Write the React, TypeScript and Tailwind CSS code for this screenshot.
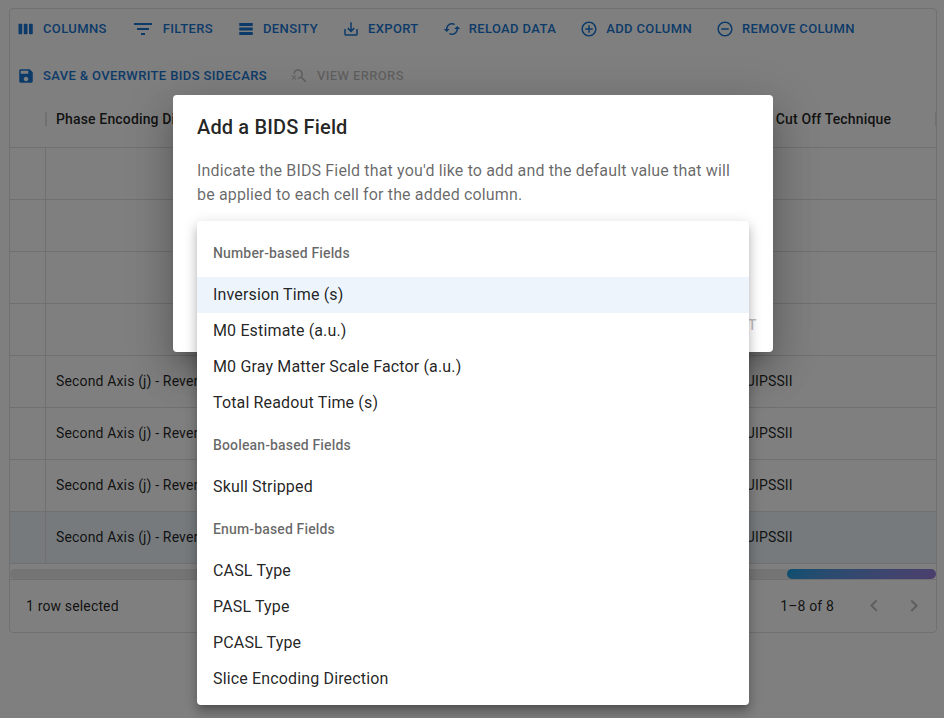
import React from 'react';

const ICONS = {
  columns:
    'M6 5H3c-.55 0-1 .45-1 1v12c0 .55.45 1 1 1h3c.55 0 1-.45 1-1V6c0-.55-.45-1-1-1zm14 0h-3c-.55 0-1 .45-1 1v12c0 .55.45 1 1 1h3c.55 0 1-.45 1-1V6c0-.55-.45-1-1-1zm-7 0h-3c-.55 0-1 .45-1 1v12c0 .55.45 1 1 1h3c.55 0 1-.45 1-1V6c0-.55-.45-1-1-1z',
  filters: 'M10 18h4v-2h-4v2zM3 6v2h18V6H3zm3 7h12v-2H6v2z',
  density: 'M21,8H3V4h18V8z M21,10H3v4h18V10z M21,16H3v4h18V16z',
  export:
    'M19 12v7H5v-7H3v7c0 1.1.9 2 2 2h14c1.1 0 2-.9 2-2v-7h-2zm-6 .67l2.59-2.58L17 11.5l-5 5-5-5 1.41-1.41L11 12.67V3h2z',
  reload:
    'M19 8l-4 4h3c0 3.31-2.69 6-6 6-1.01 0-1.97-.25-2.8-.7l-1.46 1.46C8.97 19.54 10.43 20 12 20c4.42 0 8-3.58 8-8h3l-4-4zM6 12c0-3.31 2.69-6 6-6 1.01 0 1.97.25 2.8.7l1.46-1.46C15.03 4.46 13.57 4 12 4c-4.42 0-8 3.58-8 8H1l4 4 4-4H6z',
  add: 'M13 7h-2v4H7v2h4v4h2v-4h4v-2h-4V7zm-1-5C6.48 2 2 6.48 2 12s4.48 10 10 10 10-4.48 10-10S17.52 2 12 2zm0 18c-4.41 0-8-3.59-8-8s3.59-8 8-8 8 3.59 8 8-3.59 8-8 8z',
  remove:
    'M7 11v2h10v-2H7zm5-9C6.48 2 2 6.48 2 12s4.48 10 10 10 10-4.48 10-10S17.52 2 12 2zm0 18c-4.41 0-8-3.59-8-8s3.59-8 8-8 8 3.59 8 8-3.59 8-8 8z',
  save: 'M17 3H5c-1.11 0-2 .9-2 2v14c0 1.1.89 2 2 2h14c1.1 0 2-.9 2-2V7l-4-4zm-5 16c-1.66 0-3-1.34-3-3s1.34-3 3-3 3 1.34 3 3-1.34 3-3 3zm3-10H5V5h10v4z',
  errors:
    'M15.5 14h-.79l-.28-.27C15.41 12.59 16 11.11 16 9.5 16 5.91 13.09 3 9.5 3 6.08 3 3.28 5.64 3.03 9h2.02C5.3 6.75 7.18 5 9.5 5 11.99 5 14 7.01 14 9.5S11.99 14 9.5 14c-.17 0-.33-.03-.5-.05v2.02c.17.02.33.03.5.03 1.61 0 3.09-.59 4.23-1.57l.27.28v.79l5 4.99L20.49 19l-4.99-5zM6.47 10.82 4 13.29l-2.47-2.47-.71.71L3.29 14 .82 16.47l.71.71L4 14.71l2.47 2.47.71-.71L4.71 14l2.47-2.47z',
  prev: 'M15.41 16.09l-4.58-4.59 4.58-4.59L14 5.5l-6 6 6 6z',
  next: 'M8.59 16.34l4.58-4.59-4.58-4.59L10 5.75l6 6-6 6z',
};

function Icon({ name, className }: { name: keyof typeof ICONS; className: string }) {
  return (
    <svg viewBox="0 0 24 24" fill="currentColor" className={`shrink-0 ${className}`}>
      <path d={ICONS[name]} />
    </svg>
  );
}

function ToolButton({
  icon,
  label,
  large,
  disabled,
}: {
  icon: keyof typeof ICONS;
  label: string;
  large?: boolean;
  disabled?: boolean;
}) {
  return (
    <button
      disabled={disabled}
      className={`flex h-[30.75px] items-center gap-2 whitespace-nowrap pl-[3px] pr-[5px] text-[13px] font-medium uppercase leading-[22.75px] tracking-[0.02857em] ${
        disabled ? 'text-black/[0.26]' : 'text-[#1976d2]'
      }`}
    >
      <Icon name={icon} className={large ? 'size-6' : 'size-[18px]'} />
      {label}
    </button>
  );
}

const ROWS = [
  ['', ''],
  ['', ''],
  ['', ''],
  ['', ''],
  ['Second Axis (j) - Reversed', 'QUIPSSII'],
  ['Second Axis (j) - Reversed', 'QUIPSSII'],
  ['Second Axis (j) - Reversed', 'QUIPSSII'],
  ['Second Axis (j) - Reversed', 'QUIPSSII'],
];

function Grid() {
  return (
    <div className="ml-[9px] mt-2 flex h-[625px] w-[928px] flex-col rounded border border-[#e0e0e0] text-sm tracking-[0.15px]">
      <div className="flex h-[82px] flex-wrap content-start gap-4 px-1 pt-[5px]">
        <ToolButton icon="columns" label="Columns" />
        <ToolButton icon="filters" label="Filters" large />
        <ToolButton icon="density" label="Density" />
        <ToolButton icon="export" label="Export" />
        <ToolButton icon="reload" label="Reload Data" />
        <ToolButton icon="add" label="Add Column" />
        <ToolButton icon="remove" label="Remove Column" />
        <ToolButton icon="save" label="Save & Overwrite BIDS Sidecars" />
        <ToolButton icon="errors" label="View Errors" disabled />
      </div>
      <div className="flex h-[57px] items-center border-b border-[#e0e0e0] font-medium">
        <div className="flex w-[37px] justify-end">
          <span className="h-[14px] w-[2px] bg-[#e0e0e0]" />
        </div>
        <div className="w-[679px] pl-[9px]">Phase Encoding Direction</div>
        <div className="flex-1 whitespace-nowrap pl-[10px]">Bolus Cut Off Technique</div>
        <span className="-mr-px h-[14px] w-[2px] bg-[#e0e0e0]" />
      </div>
      {ROWS.map(([axis, technique], i) => (
        <div
          key={i}
          className={`flex h-[52px] shrink-0 border-b border-[#e0e0e0] leading-[51px] ${
            i === 7 ? 'bg-[#1976d2]/[0.08]' : ''
          }`}
        >
          <div className="w-9 border-r border-[#e0e0e0]" />
          <div className="w-[680px] px-[10px]">{axis}</div>
          <div className="px-[10px]">{technique}</div>
        </div>
      ))}
      <div className="mt-[5px] flex h-[10px] shrink-0 justify-end rounded-full bg-[#e8e8e8]">
        <div className="w-[149px] rounded-full bg-linear-135 from-[#009fe0] to-[#987edc]" />
      </div>
      <div className="flex h-[53px] items-center border-t border-[#e0e0e0] pl-4 pr-0.5">
        <span className="flex-1">1 row selected</span>
        <span className="mr-5">1–8 of 8</span>
        <div className="flex text-black/[0.26]">
          <span className="p-2">
            <Icon name="prev" className="size-6" />
          </span>
          <span className="p-2">
            <Icon name="next" className="size-6" />
          </span>
        </div>
      </div>
    </div>
  );
}

const GROUPS = [
  {
    title: 'Number-based Fields',
    items: ['Inversion Time (s)', 'M0 Estimate (a.u.)', 'M0 Gray Matter Scale Factor (a.u.)', 'Total Readout Time (s)'],
  },
  { title: 'Boolean-based Fields', items: ['Skull Stripped'] },
  { title: 'Enum-based Fields', items: ['CASL Type', 'PASL Type', 'PCASL Type', 'Slice Encoding Direction'] },
];

function FieldMenu() {
  return (
    <ul className="absolute left-6 top-[126px] w-[552px] rounded bg-white py-2 shadow-[0px_5px_5px_-3px_rgba(0,0,0,0.2),0px_8px_10px_1px_rgba(0,0,0,0.14),0px_3px_14px_2px_rgba(0,0,0,0.12)]">
      {GROUPS.map((group) => (
        <React.Fragment key={group.title}>
          <li className="px-4 text-sm font-medium leading-[48px] tracking-[0.01071em] text-black/60">{group.title}</li>
          {group.items.map((item) => (
            <li
              key={item}
              className={`h-9 px-4 py-1.5 text-base leading-6 tracking-[0.00938em] ${
                item === 'Inversion Time (s)' ? 'bg-[#1976d2]/[0.08]' : ''
              }`}
            >
              {item}
            </li>
          ))}
        </React.Fragment>
      ))}
    </ul>
  );
}

export default function App() {
  return (
    <div className="relative flex h-[718px] w-[944px] items-start overflow-hidden bg-white font-[Roboto,'Liberation_Sans',sans-serif] text-black/[0.87]">
      <Grid />
      <div className="absolute inset-0 bg-black/50">
        <div className="relative ml-[173px] mt-[95px] flex h-[257px] w-[600px] flex-col rounded bg-white shadow-[0px_11px_15px_-7px_rgba(0,0,0,0.2),0px_24px_38px_3px_rgba(0,0,0,0.14),0px_9px_46px_8px_rgba(0,0,0,0.12)]">
          <h2 className="px-6 py-4 text-xl font-medium leading-8 tracking-[0.0075em]">Add a BIDS Field</h2>
          <p className="flex-1 px-6 text-base leading-6 tracking-[0.00938em] text-black/60">
            Indicate the BIDS Field that you'd like to add and the default value that will be applied to each cell for
            the added column.
          </p>
          <div className="flex justify-end px-2 pb-[9px]">
            <button
              disabled
              className="px-2 py-1.5 text-sm font-medium uppercase leading-[24.5px] tracking-[0.02857em] text-black/[0.26]"
            >
              Submit
            </button>
          </div>
          <FieldMenu />
        </div>
      </div>
    </div>
  );
}
